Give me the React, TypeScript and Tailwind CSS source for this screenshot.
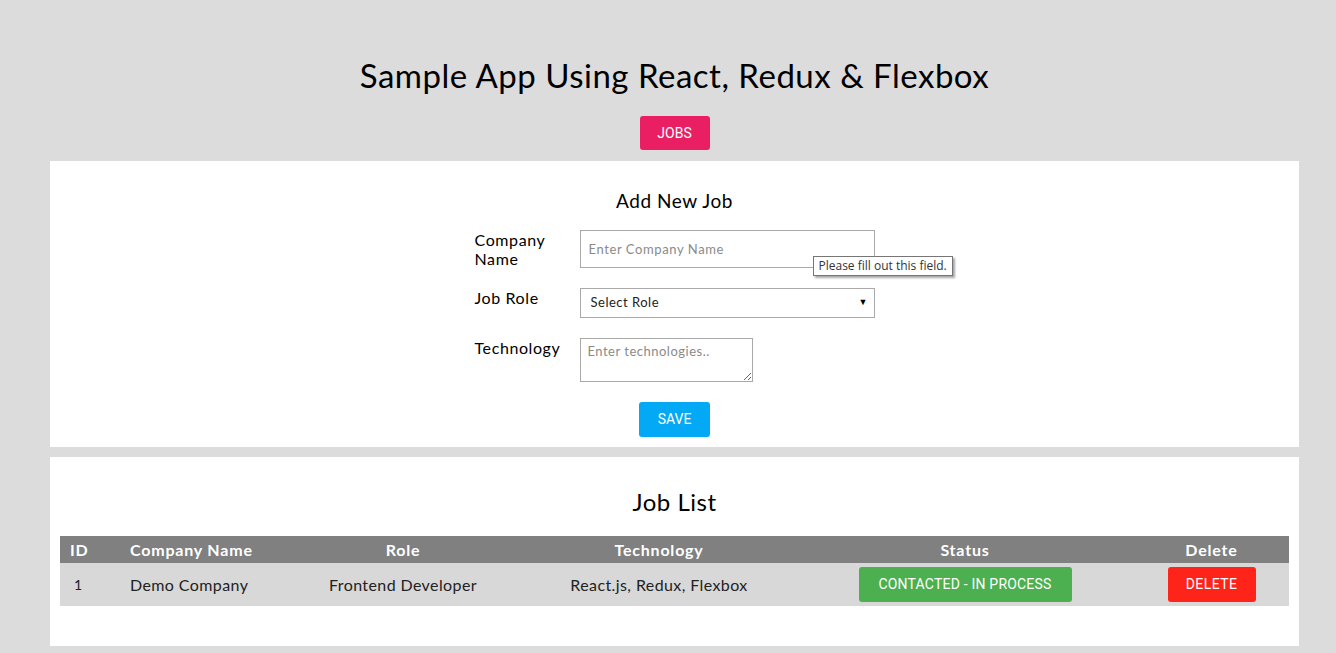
const jobs = [
  {
    id: 1,
    company: "Demo Company",
    role: "Frontend Developer",
    tech: "React.js, Redux, Flexbox",
    status: "CONTACTED - IN PROCESS",
  },
];

const App = () => {
  return (
    <div className="min-h-[653px] w-full bg-[#dcdcdc] font-['Lato',sans-serif] text-black">
      <div className="ml-[50px] w-[1249px] flex flex-col items-center">
        {/* Header */}
        <h1 className="pt-[56px] text-[33px] leading-[38px] font-normal tracking-[0.5px]">
          Sample App Using React, Redux &amp; Flexbox
        </h1>
        <button className="mt-[22px] w-[70px] h-[34px] rounded-[3px] bg-[#e91e63] text-white text-[14px] font-['Roboto',sans-serif]">
          JOBS
        </button>

        {/* Add job form */}
        <section className="mt-[11px] w-full bg-white flex flex-col items-center pt-[29px] pb-[10px]">
          <h2 className="text-[19px] leading-[22px] font-normal tracking-[0.55px]">Add New Job</h2>
          <form className="mt-[18px] w-[400px] flex flex-col gap-[20px]">
            <div className="flex items-start">
              <label className="w-[105px] text-[16px] leading-[19px] tracking-[0.6px]">
                Company
                <br />
                Name
              </label>
              <div className="relative">
                <input
                  placeholder="Enter Company Name"
                  className="w-[295px] h-[38px] border border-[#a9a9a9] px-[8px] text-[13px] tracking-[0.6px] placeholder:text-[#8a8a8a] outline-none"
                />
                <div className="absolute left-[233px] top-[26px] h-[20px] px-[5px] border border-[#767676] bg-white text-[12px] leading-[18px] text-[#333] whitespace-nowrap font-['Open_Sans',sans-serif] shadow-[2px_2px_2px_rgba(0,0,0,0.35)]">
                  Please fill out this field.
                </div>
              </div>
            </div>
            <div className="flex items-start">
              <label className="w-[105px] text-[16px] leading-[19px] tracking-[0.6px]">Job Role</label>
              <div className="relative">
                <select className="appearance-none w-[295px] h-[30px] border border-[#a9a9a9] bg-white pl-[10px] text-[13px] tracking-[0.5px] text-[#222] outline-none">
                  <option>Select Role</option>
                  <option>Frontend Developer</option>
                  <option>Backend Developer</option>
                </select>
                <span className="pointer-events-none absolute right-[7px] top-[8px] text-[9px] leading-[12px] text-black">
                  ▼
                </span>
              </div>
            </div>
            <div className="flex items-start">
              <label className="w-[105px] text-[16px] leading-[19px] tracking-[0.6px]">Technology</label>
              <textarea
                placeholder="Enter technologies.."
                className="w-[173px] h-[44px] border border-[#a9a9a9] px-[7px] py-[4px] text-[13px] leading-[16px] tracking-[0.5px] placeholder:text-[#8a8a8a] outline-none"
              />
            </div>
            <div className="flex justify-center">
              <button
                type="button"
                className="w-[71px] h-[35px] rounded-[3px] bg-[#03a9f4] text-white text-[14px] font-['Roboto',sans-serif]"
              >
                SAVE
              </button>
            </div>
          </form>
        </section>

        {/* Job list */}
        <section className="mt-[10px] w-full bg-white flex flex-col items-center pt-[30px] pb-[40px] px-[10px]">
          <h2 className="text-[24px] leading-[29px] font-normal tracking-[0.5px]">Job List</h2>
          <div className="mt-[20px] w-full text-[16px]">
            <div className="flex items-center h-[27px] bg-[#808080] text-white font-bold tracking-[0.8px]">
              <div className="w-[60px] pl-[10px]">ID</div>
              <div className="w-[160px] pl-[10px]">Company Name</div>
              <div className="w-[246px] text-center">Role</div>
              <div className="w-[266px] text-center">Technology</div>
              <div className="w-[346px] text-center">Status</div>
              <div className="w-[151px] pr-[4px] text-center">Delete</div>
            </div>
            {jobs.map((job) => (
              <div key={job.id} className="flex items-center h-[43px] bg-[#d8d8d8] text-[#222] tracking-[0.4px]">
                <div className="w-[60px] pl-[14px] text-[14px]">{job.id}</div>
                <div className="w-[160px] pl-[10px]">{job.company}</div>
                <div className="w-[246px] text-center">{job.role}</div>
                <div className="w-[266px] text-center">{job.tech}</div>
                <div className="w-[346px] flex justify-center">
                  <button className="w-[213px] h-[35px] rounded-[3px] bg-[#4caf50] text-white text-[14px] tracking-[0.2px] font-['Roboto',sans-serif]">
                    {job.status}
                  </button>
                </div>
                <div className="w-[151px] pr-[4px] flex justify-center">
                  <button className="w-[88px] h-[35px] rounded-[3px] bg-[#ff2419] text-white text-[14px] font-['Roboto',sans-serif]">
                    DELETE
                  </button>
                </div>
              </div>
            ))}
          </div>
        </section>
      </div>
    </div>
  );
};

export default App;
